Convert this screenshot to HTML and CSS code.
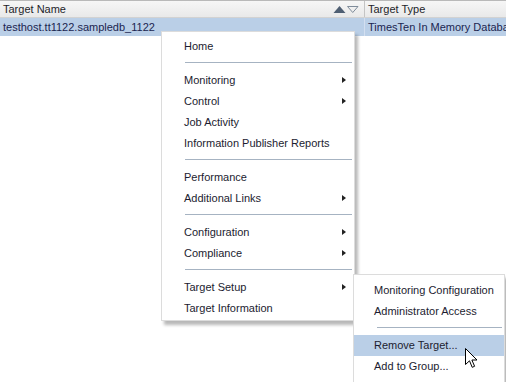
FILE: index.html
```html
<!DOCTYPE html>
<html lang="en">
<head>
    <meta charset="UTF-8">
    <title>Targets</title>
    <link rel="stylesheet" href="styles.css">
</head>
<body>

    <div class="grid">
        <!-- Column headers -->
        <div class="head">
            <div class="col col-name">
                <span>Target Name</span>
                <svg class="sort" width="26" height="9" viewBox="0 0 26 9">
                    <polygon points="0.5,8 6.5,1 12.5,8" fill="#4f5f73"/>
                    <polygon points="14.5,1.5 25,1.5 19.75,7.5" fill="none" stroke="#7f8c9a" stroke-width="1"/>
                </svg>
            </div>
            <div class="col col-type">Target Type</div>
        </div>

        <!-- Selected row -->
        <div class="row selected">
            <div class="col col-name">testhost.tt1122.sampledb_1122</div>
            <div class="col col-type">TimesTen In Memory Database</div>
        </div>
    </div>

    <!-- Context menu -->
    <ul class="menu main-menu">
        <li class="item">Home</li>
        <li class="sep"></li>
        <li class="item sub">Monitoring</li>
        <li class="item sub">Control</li>
        <li class="item">Job Activity</li>
        <li class="item">Information Publisher Reports</li>
        <li class="sep"></li>
        <li class="item">Performance</li>
        <li class="item sub">Additional Links</li>
        <li class="sep"></li>
        <li class="item sub">Configuration</li>
        <li class="item sub">Compliance</li>
        <li class="sep"></li>
        <li class="item sub">Target Setup</li>
        <li class="item">Target Information</li>
    </ul>

    <!-- Target Setup submenu -->
    <ul class="menu sub-menu">
        <li class="item">Monitoring Configuration</li>
        <li class="item">Administrator Access</li>
        <li class="sep"></li>
        <li class="item hover">Remove Target...</li>
        <li class="item">Add to Group...</li>
    </ul>

    <!-- Mouse pointer -->
    <svg class="cursor" width="13" height="21" viewBox="0 0 13 21">
        <path d="M0.5,0.5 L0.5,16.5 L4.5,12.8 L7.2,19.3 L9.6,18.3 L6.9,12 L12,12 Z" fill="#fff" stroke="#000" stroke-width="1" stroke-linejoin="miter"/>
    </svg>

</body>
</html>
```

FILE: styles.css
```css
body {
    margin: 0;
    font-family: "Liberation Sans", Arial, sans-serif;
    font-size: 11px;
    color: #1e1e2a;
    background: #fff;
    width: 506px;
    height: 382px;
    overflow: hidden;
    position: relative;
}

.grid {
    width: 506px;
}

.head {
    display: flex;
    height: 16px;
    border-top: 1px solid #b9b9b9;
    border-bottom: 1px solid #d2d2d2;
    background: linear-gradient(#f6f6f6, #e9e9e9);
}

.row {
    display: flex;
    height: 18px;
}

.row.selected {
    background-color: #bacfe7;
    color: #1a2550;
}

.col {
    display: flex;
    flex: none;
    align-items: center;
    white-space: nowrap;
}

.col-name {
    width: 361px;
    padding-left: 3px;
    justify-content: space-between;
}

.head .col-name {
    border-right: 1px solid #c4c4c4;
}

.row .col-name {
    border-right: 1px solid #d3dff0;
}

.col-type {
    width: 160px;
    padding-left: 3px;
}

.sort {
    margin-right: 5px;
}

.menu {
    list-style: none;
    margin: 0;
    position: absolute;
    background: #fff;
    border: 1px solid #dcdcdc;
    box-shadow: 3px 4px 3px rgba(0, 0, 0, 0.28);
    color: #1c1c30;
}

.main-menu {
    left: 161px;
    top: 31px;
    width: 192px;
    padding: 4px 0 1px 0;
}

.main-menu .item {
    padding-left: 22px;
}

.sub-menu {
    left: 353px;
    top: 274px;
    width: 150px;
    padding: 5px 0 10px 0;
}

.sub-menu .item {
    padding-left: 20px;
}

.item {
    height: 21px;
    box-sizing: border-box;
    display: flex;
    align-items: center;
    justify-content: space-between;
    padding-right: 8px;
    padding-bottom: 2px;
    white-space: nowrap;
}

.item.sub::after {
    content: "";
    border-left: 4px solid #222;
    border-top: 3.5px solid transparent;
    border-bottom: 3.5px solid transparent;
}

.item.hover {
    background-color: #bacfe7;
}

.sep {
    height: 1px;
    margin: 5px 2px 7px 23px;
    background-color: #a6b3c2;
}

.cursor {
    position: absolute;
    left: 465px;
    top: 348px;
}
```
